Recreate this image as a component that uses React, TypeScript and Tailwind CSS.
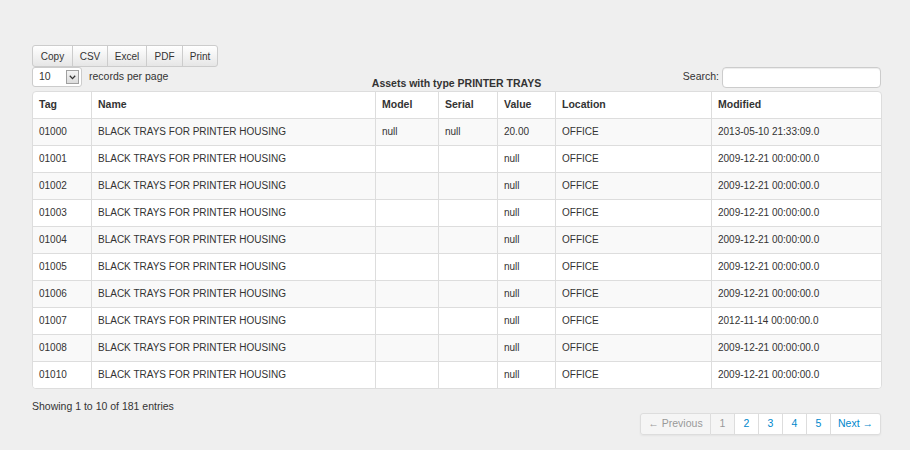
import React from 'react';

const columns = [
  { key: 'tag', label: 'Tag', width: 59 },
  { key: 'name', label: 'Name', width: 284 },
  { key: 'model', label: 'Model', width: 63 },
  { key: 'serial', label: 'Serial', width: 59 },
  { key: 'value', label: 'Value', width: 58 },
  { key: 'location', label: 'Location', width: 156 },
  { key: 'modified', label: 'Modified', width: 170 },
];

type Row = { tag: string; model: string; serial: string; value: string; modified: string };

const NAME = 'BLACK TRAYS FOR PRINTER HOUSING';

const rows: Row[] = [
  { tag: '01000', model: 'null', serial: 'null', value: '20.00', modified: '2013-05-10 21:33:09.0' },
  { tag: '01001', model: '', serial: '', value: 'null', modified: '2009-12-21 00:00:00.0' },
  { tag: '01002', model: '', serial: '', value: 'null', modified: '2009-12-21 00:00:00.0' },
  { tag: '01003', model: '', serial: '', value: 'null', modified: '2009-12-21 00:00:00.0' },
  { tag: '01004', model: '', serial: '', value: 'null', modified: '2009-12-21 00:00:00.0' },
  { tag: '01005', model: '', serial: '', value: 'null', modified: '2009-12-21 00:00:00.0' },
  { tag: '01006', model: '', serial: '', value: 'null', modified: '2009-12-21 00:00:00.0' },
  { tag: '01007', model: '', serial: '', value: 'null', modified: '2012-11-14 00:00:00.0' },
  { tag: '01008', model: '', serial: '', value: 'null', modified: '2009-12-21 00:00:00.0' },
  { tag: '01010', model: '', serial: '', value: 'null', modified: '2009-12-21 00:00:00.0' },
];

const toolButtons = [
  { label: 'Copy', w: 41 },
  { label: 'CSV', w: 36 },
  { label: 'Excel', w: 40 },
  { label: 'PDF', w: 37 },
  { label: 'Print', w: 36 },
];

function ExportButtons() {
  return (
    <div className="flex h-[22px] w-fit">
      {toolButtons.map((b, i) => (
        <button
          key={b.label}
          style={{ width: b.w }}
          className={
            'h-[22px] border border-[#cccccc] bg-gradient-to-b from-white to-[#e6e6e6] text-center text-[10px] text-[#333333] shadow-[inset_0_1px_0_rgba(255,255,255,0.3)] ' +
            (i === 0 ? 'rounded-l-[3px] ' : '-ml-px ') +
            (i === toolButtons.length - 1 ? 'rounded-r-[3px]' : '')
          }
        >
          {b.label}
        </button>
      ))}
    </div>
  );
}

function LengthSelect() {
  return (
    <div className="flex items-center gap-[7px]">
      <div className="flex h-[20px] w-[50px] items-center justify-between rounded-[3px] border border-[#cccccc] bg-white pl-[6px] pr-[2px]">
        <span className="text-[10.5px] text-[#333333]">10</span>
        <span className="flex h-[14px] w-[13px] items-center justify-center border border-[#a0a0a0] bg-gradient-to-b from-[#f4f4f4] to-[#dcdcdc]">
          <svg width="7" height="5" viewBox="0 0 7 5">
            <path d="M0.8 0.8 L3.5 3.6 L6.2 0.8" fill="none" stroke="#333" strokeWidth="1.3" />
          </svg>
        </span>
      </div>
      <span className="text-[10.5px] text-[#333333]">records per page</span>
    </div>
  );
}

function SearchBox() {
  return (
    <div className="flex items-center justify-end gap-[3px]">
      <span className="mb-[2px] text-[10.5px] text-[#333333]">Search:</span>
      <div className="h-[21px] w-[159px] rounded-[4px] border border-[#cccccc] bg-white shadow-[inset_0_1px_1px_rgba(0,0,0,0.075)]" />
    </div>
  );
}

function Pagination() {
  const items = [
    { label: '← Previous', w: 71, state: 'disabled' },
    { label: '1', w: 24, state: 'active' },
    { label: '2', w: 24, state: '' },
    { label: '3', w: 24, state: '' },
    { label: '4', w: 24, state: '' },
    { label: '5', w: 24, state: '' },
    { label: 'Next →', w: 50, state: '' },
  ];
  return (
    <div className="flex h-[22px] rounded-[3px] shadow-[0_1px_2px_rgba(0,0,0,0.05)]">
      {items.map((it, i) => (
        <span
          key={it.label}
          style={{ width: it.w }}
          className={
            'flex h-[22px] items-center justify-center border border-[#dddddd] text-[10.5px] ' +
            (i === 0 ? 'rounded-l-[3px] ' : 'border-l-0 ') +
            (i === items.length - 1 ? 'rounded-r-[3px] ' : '') +
            (it.state === 'disabled'
              ? 'bg-[#f5f5f5] text-[#999999]'
              : it.state === 'active'
                ? 'bg-[#f5f5f5] text-[#999999]'
                : 'bg-white text-[#0088cc]')
          }
        >
          {it.label}
        </span>
      ))}
    </div>
  );
}

export default function App() {
  return (
    <div
      className="min-h-[450px] w-[910px] bg-[#efefef] pt-[45px]"
      style={{ fontFamily: '"Liberation Sans", Arial, sans-serif' }}
    >
      <div className="ml-[32px] w-[849px]">
        <ExportButtons />
        <div className="grid h-[24px] grid-cols-[1fr_auto_1fr] items-start">
          <LengthSelect />
          <div className="self-end pb-[1px] text-[10.5px] font-bold leading-[14px] text-[#333333]">
            Assets with type PRINTER TRAYS
          </div>
          <SearchBox />
        </div>

        <table className="w-[849px] table-fixed border-separate border-spacing-0 overflow-hidden rounded-[4px] border border-[#dddddd] bg-white text-[10px] text-[#333333]">
          <colgroup>
            {columns.map((c, i) => (
              <col key={c.key} style={{ width: i === 0 ? c.width - 1 : c.width }} />
            ))}
          </colgroup>
          <thead>
            <tr className="h-[26px]">
              {columns.map((c, i) => (
                <th
                  key={c.key}
                  className={'px-[6px] text-left text-[10.5px] font-bold ' + (i > 0 ? 'border-l border-[#dddddd]' : '')}
                >
                  {c.label}
                </th>
              ))}
            </tr>
          </thead>
          <tbody>
            {rows.map((r, ri) => {
              const cells = [r.tag, NAME, r.model, r.serial, r.value, 'OFFICE', r.modified];
              return (
                <tr key={r.tag} className={'h-[27px] ' + (ri % 2 === 0 ? 'bg-[#f9f9f9]' : 'bg-white')}>
                  {cells.map((v, ci) => (
                    <td
                      key={ci}
                      className={
                        'border-t border-[#dddddd] px-[6px] leading-[26px] ' + (ci > 0 ? 'border-l' : '')
                      }
                    >
                      {v}
                    </td>
                  ))}
                </tr>
              );
            })}
          </tbody>
        </table>

        <div className="flex items-start justify-between">
          <div className="mt-[10px] text-[10.5px] text-[#333333]">Showing 1 to 10 of 181 entries</div>
          <div className="mt-[24px]">
            <Pagination />
          </div>
        </div>
      </div>
    </div>
  );
}
